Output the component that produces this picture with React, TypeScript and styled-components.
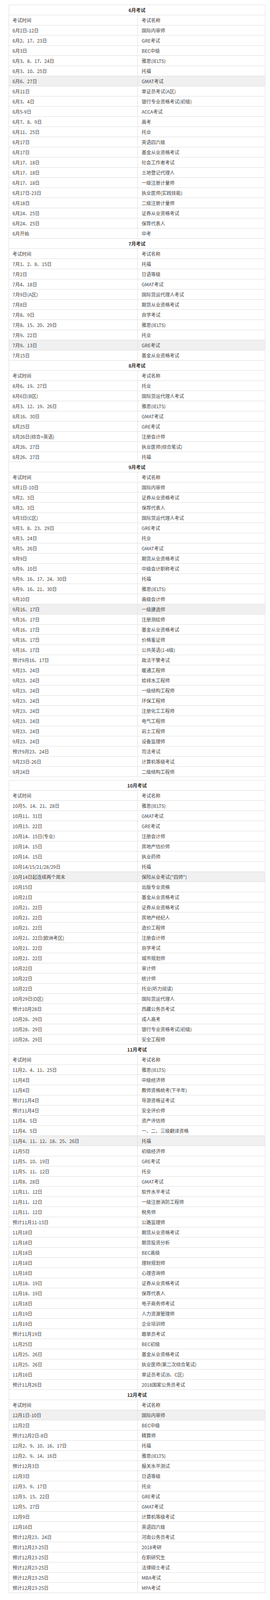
import React from 'react';
import styled, { createGlobalStyle } from 'styled-components';

type Entry = [string, string, boolean?];
type Section = { title: string; rows: Entry[] };

const table1: Section[] = [
  {
    title: '6月考试',
    rows: [
      ['6月2日-12日', '国际内审师'],
      ['6月2、17、23日', 'GRE考试'],
      ['6月3日', 'BEC中级'],
      ['6月3、8、17、24日', '雅思(IELTS)'],
      ['6月3、10、25日', '托福'],
      ['6月6、27日', 'GMAT考试', true],
      ['6月11日', '单证员考试(A区)'],
      ['6月3、4日', '银行专业资格考试(初级)'],
      ['6月5-9日', 'ACCA考试'],
      ['6月7、8、9日', '高考'],
      ['6月11、25日', '托业'],
      ['6月17日', '英语四六级'],
      ['6月17日', '基金从业资格考试'],
      ['6月17、18日', '社会工作者考试'],
      ['6月17、18日', '土地登记代理人'],
      ['6月17、18日', '一级注册计量师'],
      ['6月17日-23日', '执业医师(实践技能)'],
      ['6月18日', '二级注册计量师'],
      ['6月24、25日', '证券从业资格考试'],
      ['6月24、25日', '保荐代表人'],
      ['6月开始', '中考'],
    ],
  },
  {
    title: '7月考试',
    rows: [
      ['7月1、2、8、15日', '托福'],
      ['7月2日', '日语等级'],
      ['7月4、18日', 'GMAT考试'],
      ['7月9日(A区)', '国际货运代理人考试'],
      ['7月8日', '期货从业资格考试'],
      ['7月8、9日', '自学考试'],
      ['7月8、15、20、29日', '雅思(IELTS)'],
      ['7月9、22日', '托业'],
      ['7月9、13日', 'GRE考试', true],
      ['7月15日', '基金从业资格考试'],
    ],
  },
  {
    title: '8月考试',
    rows: [
      ['8月6、19、27日', '托业'],
      ['8月6日(B区)', '国际货运代理人考试'],
      ['8月3、12、19、26日', '雅思(IELTS)'],
      ['8月16、30日', 'GMAT考试'],
      ['8月25日', 'GRE考试'],
      ['8月26日(综合+英语)', '注册会计师'],
      ['8月26、27日', '执业医师(综合笔试)'],
      ['8月26、27日', '托福'],
    ],
  },
  {
    title: '9月考试',
    rows: [
      ['9月1日-10日', '国际内审师'],
      ['9月2、3日', '证券从业资格考试'],
      ['9月2、3日', '保荐代表人'],
      ['9月3日(C区)', '国际货运代理人考试'],
      ['9月3、8、23、29日', 'GRE考试'],
      ['9月3、24日', '托业'],
      ['9月5、26日', 'GMAT考试'],
      ['9月9日', '期货从业资格考试'],
      ['9月9、10日', '中级会计职称考试'],
      ['9月9、16、17、24、30日', '托福'],
      ['9月9、16、21、30日', '雅思(IELTS)'],
      ['9月10日', '高级会计师'],
      ['9月16、17日', '一级建造师', true],
      ['9月16、17日', '注册测绘师'],
      ['9月16、17日', '基金从业资格考试'],
      ['9月16、17日', '价格鉴证师'],
      ['9月16、17日', '公共英语(1-4级)'],
      ['预计9月16、17日', '政法干警考试'],
      ['9月23、24日', '暖通工程师'],
      ['9月23、24日', '给排水工程师'],
      ['9月23、24日', '一级结构工程师'],
      ['9月23、24日', '环保工程师'],
      ['9月23、24日', '注册化工工程师'],
      ['9月23、24日', '电气工程师'],
      ['9月23、24日', '岩土工程师'],
      ['9月23、24日', '设备监理师'],
      ['预计9月23、24日', '司法考试'],
      ['9月23日-26日', '计算机等级考试'],
      ['9月24日', '二级结构工程师'],
    ],
  },
];

const table2: Section[] = [
  {
    title: '10月考试',
    rows: [
      ['10月5、14、21、28日', '雅思(IELTS)'],
      ['10月11、31日', 'GMAT考试'],
      ['10月13、22日', 'GRE考试'],
      ['10月14、15日(专业)', '注册会计师'],
      ['10月14、15日', '房地产估价师'],
      ['10月14、15日', '执业药师'],
      ['10月14/15/21/28/29日', '托福'],
      ['10月14日起连续两个周末', '保险从业考试("四师")', true],
      ['10月15日', '出版专业资格'],
      ['10月21日', '基金从业资格考试'],
      ['10月21、22日', '证券从业资格考试'],
      ['10月21、22日', '房地产经纪人'],
      ['10月21、22日', '造价工程师'],
      ['10月21、22日(欧洲考区)', '注册会计师'],
      ['10月21、22日', '自学考试'],
      ['10月21、22日', '城市规划师'],
      ['10月22日', '审计师'],
      ['10月22日', '统计师'],
      ['10月22日', '托业(听力阅读)'],
      ['10月29日(D区)', '国际货运代理人'],
      ['预计10月28日', '西藏公务员考试'],
      ['10月28、29日', '成人高考'],
      ['10月28、29日', '银行专业资格考试(初级)'],
      ['10月28、29日', '安全工程师'],
    ],
  },
  {
    title: '11月考试',
    rows: [
      ['11月2、4、11、25日', '雅思(IELTS)'],
      ['11月4日', '中级经济师'],
      ['11月4日', '教师资格统考(下半年)'],
      ['预计11月4日', '导游资格证考试'],
      ['预计11月4日', '安全评价师'],
      ['11月4、5日', '资产评估师'],
      ['11月4、5日', '一、二、三级翻译资格'],
      ['11月4、11、12、18、25、26日', '托福', true],
      ['11月5日', '初级经济师'],
      ['11月5、10、19日', 'GRE考试'],
      ['11月5、11、12日', '托业'],
      ['11月8、28日', 'GMAT考试'],
      ['11月11、12日', '软件水平考试'],
      ['11月11、12日', '一级注册消防工程师'],
      ['11月11、12日', '税务师'],
      ['预计11月11-13日', '公路监理师'],
      ['11月18日', '期货从业资格考试'],
      ['11月18日', '期货投资分析'],
      ['11月18日', 'BEC高级'],
      ['11月18日', '理财规划师'],
      ['11月18日', '心理咨询师'],
      ['11月18、19日', '证券从业资格考试'],
      ['11月18、19日', '保荐代表人'],
      ['11月18日', '电子商务师考试'],
      ['11月19日', '人力资源管理师'],
      ['11月19日', '企业培训师'],
      ['预计11月19日', '跟单员考试'],
      ['11月25日', 'BEC初级'],
      ['11月25、26日', '基金从业资格考试'],
      ['11月25、26日', '执业医师(第二次综合笔试)'],
      ['11月16日', '单证员考试(B、C区)'],
      ['预计11月26日', '2018国家公务员考试'],
    ],
  },
  {
    title: '12月考试',
    rows: [
      ['12月1日-10日', '国际内审师', true],
      ['12月2日', 'BEC中级'],
      ['预计12月2日-8日', '精算师'],
      ['12月2、9、10、16、17日', '托福'],
      ['12月2、9、14、16日', '雅思(IELTS)'],
      ['预计12月3日', '报关水平测试'],
      ['12月3日', '日语等级'],
      ['12月3、9、17日', '托业'],
      ['12月3、15、22日', 'GRE考试'],
      ['12月5、27日', 'GMAT考试'],
      ['12月9日', '计算机等级考试'],
      ['12月16日', '英语四六级'],
      ['预计12月23、24日', '河南公务员考试'],
      ['预计12月23-25日', '2018考研'],
      ['预计12月23-25日', '在职研究生'],
      ['预计12月23-25日', '法律硕士考试'],
      ['预计12月23-25日', 'MBA考试'],
      ['预计12月23-25日', 'MPA考试'],
    ],
  },
];

const GlobalStyle = createGlobalStyle`
  html, body {
    margin: 0;
    padding: 0;
    background: #ffffff;
  }
  body {
    font-family: "Noto Sans CJK SC", "Noto Sans", "Liberation Sans", sans-serif;
    font-size: 12px;
    line-height: 16px;
  }
`;

const Page = styled.div`
  display: flex;
  flex-direction: column;
  gap: 8px;
  padding: 12px 12px 0 22px;
`;

const Table = styled.div`
  display: flex;
  flex-direction: column;
  border: 1px solid #dddddd;
  border-bottom: none;
  background: #ffffff;
`;

const TitleRow = styled.div`
  flex: 0 0 26px;
  height: 26px;
  box-sizing: border-box;
  border-bottom: 1px solid #dddddd;
  display: flex;
  align-items: center;
  justify-content: center;
  font-size: 12px;
  line-height: 16px;
  font-weight: 700;
  color: #333333;
`;

const Row = styled.div<{ $highlight?: boolean }>`
  flex: 0 0 26px;
  display: grid;
  grid-template-columns: 328px 1fr;
  height: 26px;
  box-sizing: border-box;
  border-bottom: 1px solid #dddddd;
  background: ${(p) => (p.$highlight ? '#f0f0f0' : '#ffffff')};
`;

const Cell = styled.div<{ $divider?: boolean }>`
  display: flex;
  align-items: center;
  min-width: 0;
  padding: 0 10px 0 ${(p) => (p.$divider ? '10px' : '9px')};
  font-size: 12px;
  line-height: 16px;
  color: #444444;
  white-space: nowrap;
  border-left: ${(p) => (p.$divider ? '1px solid #dddddd' : 'none')};
`;

const SectionBlock: React.FC<{ section: Section }> = ({ section }) => (
  <>
    <TitleRow>{section.title}</TitleRow>
    <Row>
      <Cell>考试时间</Cell>
      <Cell $divider>考试名称</Cell>
    </Row>
    {section.rows.map(([time, name, hl], i) => (
      <Row key={i} $highlight={!!hl}>
        <Cell>{time}</Cell>
        <Cell $divider>{name}</Cell>
      </Row>
    ))}
  </>
);

export default function App() {
  return (
    <>
      <GlobalStyle />
      <Page>
        <Table>
          {table1.map((s) => (
            <SectionBlock key={s.title} section={s} />
          ))}
        </Table>
        <Table>
          {table2.map((s) => (
            <SectionBlock key={s.title} section={s} />
          ))}
        </Table>
      </Page>
    </>
  );
}
